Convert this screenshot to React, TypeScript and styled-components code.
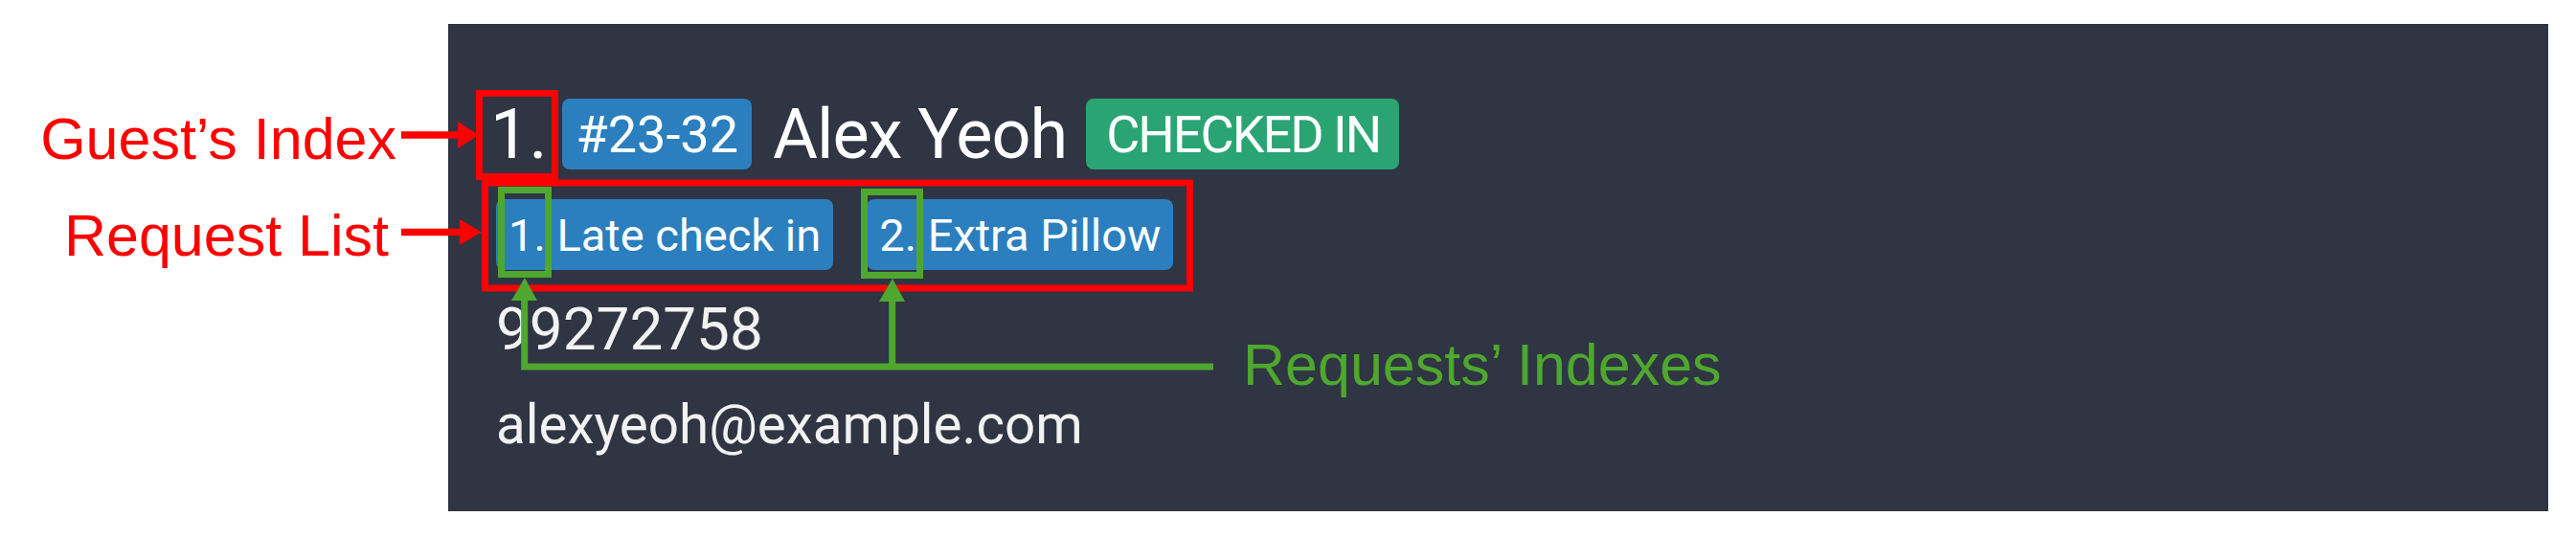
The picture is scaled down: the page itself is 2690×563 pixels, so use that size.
import styled, { createGlobalStyle } from "styled-components";

const GlobalStyle = createGlobalStyle`
  body {
    margin: 0;
    background: #ffffff;
  }
`;

const Page = styled.div`
  position: relative;
  display: flex;
  align-items: flex-start;
  width: 2690px;
  height: 563px;
  overflow: hidden;
`;

// left side callouts, outside the card
const LabelColumn = styled.div`
  width: 468px;
  flex-shrink: 0;
  display: flex;
  flex-direction: column;
  align-items: flex-end;
  gap: 40px;
  padding-top: 115px;
`;

const Callout = styled.div<{ $right?: number; $color?: string }>`
  font-family: "Liberation Sans", Arial, sans-serif;
  font-size: 61px;
  line-height: 61px;
  white-space: nowrap;
  color: ${(p) => p.$color || "#ff0000"};
  margin-right: ${(p) => p.$right || 0}px;
`;

const FloatingCallout = styled(Callout)`
  position: absolute;
  left: 1298px;
  top: 351px;
`;

const Panel = styled.div`
  margin-top: 25px;
  width: 2193px;
  height: 509px;
  box-sizing: border-box;
  background: #2f3543;
  padding: 78px 0 0 44px;
  display: flex;
  flex-direction: column;
  font-family: Roboto, "Liberation Sans", sans-serif;
  color: #ffffff;
`;

const HeaderRow = styled.div`
  display: flex;
  align-items: center;
  height: 74px;
`;

const Index = styled.span`
  font-size: 72px;
  margin-right: 16px;
`;

const Name = styled.span`
  font-size: 72px;
  letter-spacing: -1px;
  margin: 0 20px 0 22px;
`;

const Tag = styled.span<{ $tone: "blue" | "green"; $size?: number }>`
  display: inline-flex;
  align-items: center;
  height: 74px;
  box-sizing: border-box;
  padding: 0 ${(p) => (p.$tone === "green" ? 20 : 14)}px 0
    ${(p) => (p.$tone === "green" ? 21 : 14)}px;
  border-radius: 8px;
  background: ${(p) => (p.$tone === "green" ? "#2ba473" : "#2c7fbf")};
  color: #ffffff;
  font-size: ${(p) => p.$size || 54}px;
  letter-spacing: ${(p) => (p.$tone === "green" ? -2 : 0)}px;
  white-space: nowrap;
`;

const Body = styled.div`
  padding-left: 6px;
  display: flex;
  flex-direction: column;
`;

const RequestRow = styled.div`
  display: flex;
  gap: 35px;
  margin-top: 31px;
`;

const RequestTag = styled(Tag)`
  padding: 0 13px;
`;

const Detail = styled.div<{ $size: number; $line: number; $gap: number }>`
  font-size: ${(p) => p.$size}px;
  line-height: ${(p) => p.$line}px;
  margin-top: ${(p) => p.$gap}px;
  color: #f2f2f2;
`;

const Overlay = styled.svg`
  position: absolute;
  left: 0;
  top: 0;
  pointer-events: none;
`;

const RED = "#ff0000";
const GREEN = "#4ea72e";

const requests = ["Late check in", "Extra Pillow"];

const Annotations = () => (
  <Overlay width={2690} height={563} viewBox="0 0 2690 563">
    <g fill="none" stroke={RED} strokeWidth={7}>
      <rect x={500.5} y={97.5} width={79} height={87} />
      <rect x={506.5} y={191} width={736} height={110} />
      <line x1={419} y1={141} x2={482} y2={141} strokeWidth={7.5} />
      <line x1={419} y1={242.5} x2={484} y2={242.5} strokeWidth={7.5} />
    </g>
    <g fill={RED}>
      <polygon points="478,127 500,141 478,155" />
      <polygon points="480,229 503,242.5 480,256" />
    </g>
    <g fill="none" stroke={GREEN} strokeWidth={7}>
      <rect x={523.5} y={198.5} width={49} height={88} />
      <rect x={902.5} y={200.5} width={58} height={87} />
      <polyline points="547.7,310 547.7,383 1267,383" />
      <line x1={931.7} y1={310} x2={931.7} y2={383} />
    </g>
    <g fill={GREEN}>
      <polygon points="534,314 548,290 561,314" />
      <polygon points="918,315 932,291 945,315" />
    </g>
  </Overlay>
);

const App = () => {
  return (
    <>
      <GlobalStyle />
      <Page>
        <LabelColumn>
          <Callout $right={54}>Guest’s Index</Callout>
          <Callout $right={62}>Request List</Callout>
        </LabelColumn>

        <Panel>
          <HeaderRow>
            <Index>1.</Index>
            <Tag $tone="blue">#23-32</Tag>
            <Name>Alex Yeoh</Name>
            <Tag $tone="green">CHECKED IN</Tag>
          </HeaderRow>
          <Body>
            <RequestRow>
              {requests.map((r, i) => (
                <RequestTag key={r} $tone="blue" $size={47}>
                  {i + 1}. {r}
                </RequestTag>
              ))}
            </RequestRow>
            <Detail $size={62} $line={72} $gap={26}>
              99272758
            </Detail>
            <Detail $size={56.5} $line={66} $gap={31}>
              alexyeoh@example.com
            </Detail>
          </Body>
        </Panel>

        <Annotations />
        <FloatingCallout $color={GREEN}>Requests’ Indexes</FloatingCallout>
      </Page>
    </>
  );
};

export default App;
